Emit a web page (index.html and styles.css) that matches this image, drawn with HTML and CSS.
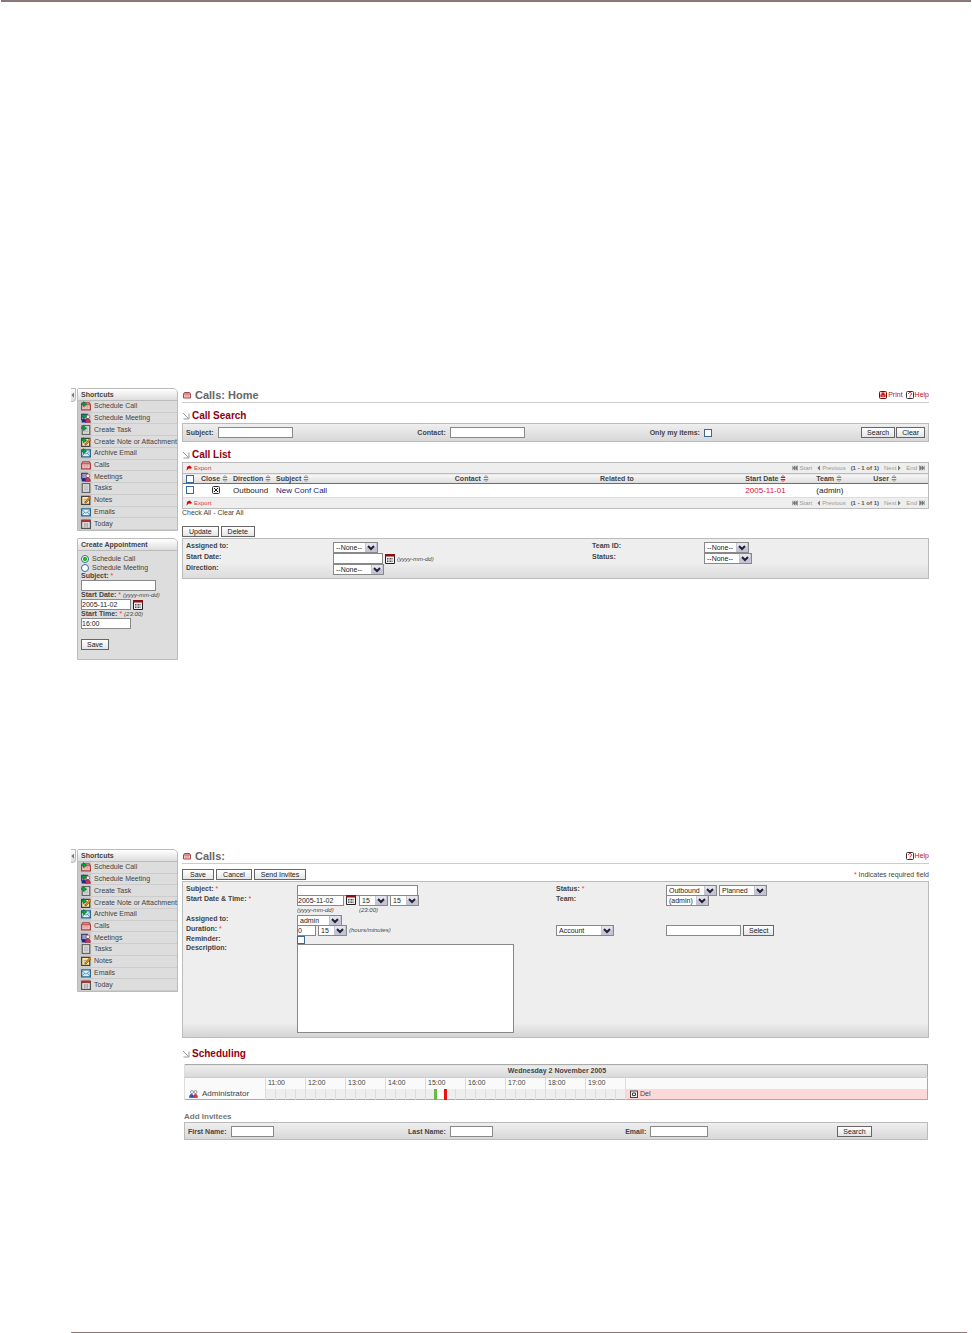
FILE: index.html
```html
<!DOCTYPE html>
<html lang="en">
<head>
    <meta charset="UTF-8">
    <meta name="viewport" content="width=device-width, initial-scale=1.0">
    <title>Calls</title>
    <link rel="stylesheet" href="styles.css">
</head>
<body>
    <!-- shared icons -->
    <svg class="sprite" aria-hidden="true">
        <symbol id="phone" viewBox="0 0 16 16"><path d="M1 6l2-3h10l2 3v8H1z" fill="#f6c8c8" stroke="#a44" stroke-width="2"/><path d="M2 6h12" stroke="#b55" stroke-width="2"/><path d="M5 9h6v2H5z" fill="#fff" stroke="#c77"/></symbol>
        <symbol id="people" viewBox="0 0 16 16"><path d="M1 2h9v9H1z" fill="#99c" stroke="#447" stroke-width="2"/><circle cx="11" cy="6" r="3" fill="#eee" stroke="#833"/><path d="M1 15c0-7 7-7 7 0z" fill="#228"/><path d="M7 15c0-8 8-8 8 0z" fill="#c35" stroke="#724"/></symbol>
        <symbol id="task" viewBox="0 0 16 16"><path d="M2 1h12v14H2z" fill="#eee" stroke="#666" stroke-width="2"/><path d="M4 5h8M4 8h8M4 11h8" stroke="#777" stroke-width="1"/></symbol>
        <symbol id="note" viewBox="0 0 16 16"><path d="M1 2h13v13H1z" fill="#ffe9a8" stroke="#444" stroke-width="2"/><path d="M4 7h5M4 10h4" stroke="#777"/><path d="M6 12L14 2l2 2-8 9z" fill="#e90" stroke="#733"/></symbol>
        <symbol id="mail" viewBox="0 0 16 16"><path d="M1 3h14v11H1z" fill="#d8f0fa" stroke="#2a6a90" stroke-width="2"/><path d="M1 4l7 6 7-6M1 14l5-6M15 14l-5-6" fill="none" stroke="#2a6a90"/></symbol>
        <symbol id="day" viewBox="0 0 16 16"><path d="M1 2h14v13H1z" fill="#eee" stroke="#555" stroke-width="2"/><path d="M1 1h14v4H1z" fill="#a33"/><path d="M4 8h8M4 11h8M6 6v8M10 6v8" stroke="#888"/></symbol>
        <symbol id="plus" viewBox="0 0 16 16"><path d="M1 6V3h3V1l5 4-5 4V6z" fill="#0a3" stroke="#063"/></symbol>
        <symbol id="section" viewBox="0 0 16 16"><path d="M2 2l11 11M14 3v11H3" fill="none" stroke="#999" stroke-width="2"/></symbol>
        <symbol id="sort" viewBox="0 0 12 14"><path d="M6 1l4 4H2zM2 9h8l-4 4z" fill="#fff" stroke="currentColor" stroke-width="2"/></symbol>
        <symbol id="export" viewBox="0 0 16 16"><path d="M1 15l2-9-1-1 8-4 6 7-4 2-5-1z" fill="#d00"/></symbol>
        <symbol id="first" viewBox="0 0 16 16"><path d="M2 2v12M8 2v12L3 8zM14 2v12L9 8z" fill="#777" stroke="#777" stroke-width="2"/></symbol>
        <symbol id="last" viewBox="0 0 16 16"><path d="M14 2v12M8 2v12l5-6zM2 2v12l5-6z" fill="#777" stroke="#777" stroke-width="2"/></symbol>
        <symbol id="prev" viewBox="0 0 8 16"><path d="M8 1v14L1 8z" fill="#777"/></symbol>
        <symbol id="next" viewBox="0 0 8 16"><path d="M0 1v14l7-7z" fill="#777"/></symbol>
        <symbol id="close" viewBox="0 0 16 16"><rect x="1" y="1" width="14" height="14" rx="2" fill="#eee" stroke="#333" stroke-width="2"/><path d="M4 4l8 8M12 4l-8 8" stroke="#222" stroke-width="2"/></symbol>
        <symbol id="delete" viewBox="0 0 16 16"><rect x="1" y="2" width="14" height="13" fill="#eee" stroke="#444" stroke-width="2"/><path d="M5 6h6v5H5z" fill="none" stroke="#444" stroke-width="2"/></symbol>
        <symbol id="print" viewBox="0 0 16 16"><rect x="1" y="1" width="14" height="14" rx="2" fill="#fdd" stroke="#611" stroke-width="2"/><path d="M5 3h6v4h2v5H3V7h2z" fill="#d11"/><path d="M5 10h6" stroke="#fff"/></symbol>
        <symbol id="help" viewBox="0 0 16 16"><rect x="1" y="1" width="14" height="14" rx="2" fill="#fff" stroke="#333" stroke-width="2"/><path d="M5 6c0-4 6-4 6 0 0 2-3 2-3 4M8 11v2" fill="none" stroke="#d11" stroke-width="2"/></symbol>
        <symbol id="calendar" viewBox="0 0 20 20"><path d="M1 1h18v18H1z" fill="#eee" stroke="#222" stroke-width="2"/><path d="M0 0h20v5H0z" fill="#811"/><path d="M4 9h12M4 12h12M4 15h12" stroke="#555" stroke-width="2" stroke-dasharray="2 1"/></symbol>
        <symbol id="users" viewBox="0 0 18 16"><circle cx="6" cy="4" r="3" fill="#fff" stroke="#444"/><circle cx="13" cy="4" r="3" fill="#fff" stroke="#444"/><path d="M1 15c0-9 8-9 8 0z" fill="#35c" stroke="#226"/><path d="M9 15c0-9 8-9 8 0z" fill="#d34" stroke="#722"/></symbol>
    </svg>

    <div class="page">
        <section class="screen">
            <a class="handle" href="#" aria-label="Hide shortcuts"><svg><use href="#prev"/></svg></a>
            <aside class="sidebar">
                <nav class="box">
                    <h2 class="box-title">Shortcuts</h2>
                    <ul class="shortcuts">
                        <li><svg><use href="#phone"/><use href="#plus"/></svg><a href="#">Schedule Call</a></li>
                        <li><svg><use href="#people"/><use href="#plus"/></svg><a href="#">Schedule Meeting</a></li>
                        <li><svg><use href="#task"/><use href="#plus"/></svg><a href="#">Create Task</a></li>
                        <li><svg><use href="#note"/><use href="#plus"/></svg><a href="#">Create Note or Attachment</a></li>
                        <li><svg><use href="#mail"/><use href="#plus"/></svg><a href="#">Archive Email</a></li>
                        <li><svg><use href="#phone"/></svg><a href="#">Calls</a></li>
                        <li><svg><use href="#people"/></svg><a href="#">Meetings</a></li>
                        <li><svg><use href="#task"/></svg><a href="#">Tasks</a></li>
                        <li><svg><use href="#note"/></svg><a href="#">Notes</a></li>
                        <li><svg><use href="#mail"/></svg><a href="#">Emails</a></li>
                        <li><svg><use href="#day"/></svg><a href="#">Today</a></li>
                    </ul>
                </nav>
                <div class="box">
                    <h2 class="box-title">Create Appointment</h2>
                    <form class="quick">
                        <label class="choice"><input type="radio" name="kind" checked>Schedule Call</label>
                        <label class="choice"><input type="radio" name="kind">Schedule Meeting</label>
                        <label for="q-subject">Subject: <b>*</b></label>
                        <input class="w-l" type="text" id="q-subject">
                        <label for="q-date">Start Date: <b>*</b> <i>(yyyy-mm-dd)</i></label>
                        <div class="fields"><input class="w-m" type="text" id="q-date" value="2005-11-02"><svg class="cal"><use href="#calendar"/></svg></div>
                        <label for="q-time">Start Time: <b>*</b> <i>(23:00)</i></label>
                        <input class="w-m" type="text" id="q-time" value="16:00">
                        <button type="button">Save</button>
                    </form>
                </div>
            </aside>
            <main class="main">
                <header class="title">
                    <h1><svg><use href="#phone"/></svg>Calls: Home</h1>
                    <a href="#"><svg><use href="#print"/></svg>Print</a>
                    <a href="#"><svg><use href="#help"/></svg>Help</a>
                </header>

                <h2 class="heading"><svg><use href="#section"/></svg>Call Search</h2>
                <form class="panel search">
                    <div><label for="s-subject">Subject:</label><input class="w-l" type="text" id="s-subject"></div>
                    <div><label for="s-contact">Contact:</label><input class="w-l" type="text" id="s-contact"></div>
                    <div><label for="s-mine">Only my items:</label><input type="checkbox" id="s-mine"></div>
                    <div class="end"><button type="button">Search</button><button type="button">Clear</button></div>
                </form>

                <h2 class="heading"><svg><use href="#section"/></svg>Call List</h2>
                <div class="list">
                    <div class="pager">
                        <a href="#"><svg><use href="#export"/></svg>Export</a>
                        <span><svg><use href="#first"/></svg>Start</span>
                        <span><svg class="thin"><use href="#prev"/></svg>Previous</span>
                        <strong>(1 - 1 of 1)</strong>
                        <span>Next<svg class="thin"><use href="#next"/></svg></span>
                        <span>End<svg><use href="#last"/></svg></span>
                    </div>
                    <table class="calls">
                        <colgroup>
                            <col class="c-check"><col class="c-close"><col class="c-dir"><col class="c-subject"><col class="c-wide"><col class="c-wide"><col class="c-date"><col class="c-team"><col>
                        </colgroup>
                        <thead>
                            <tr>
                                <th><input type="checkbox" aria-label="Select all"></th>
                                <th>Close <svg><use href="#sort"/></svg></th>
                                <th>Direction <svg><use href="#sort"/></svg></th>
                                <th>Subject <svg><use href="#sort"/></svg></th>
                                <th>Contact <svg><use href="#sort"/></svg></th>
                                <th>Related to</th>
                                <th class="sorted">Start Date <svg><use href="#sort"/></svg></th>
                                <th>Team <svg><use href="#sort"/></svg></th>
                                <th>User <svg><use href="#sort"/></svg></th>
                            </tr>
                        </thead>
                        <tbody>
                            <tr>
                                <td><input type="checkbox" aria-label="Select New Conf Call"></td>
                                <td class="mid"><svg><use href="#close"/></svg></td>
                                <td>Outbound</td>
                                <td><a href="#">New Conf Call</a></td>
                                <td></td>
                                <td></td>
                                <td class="late">2005-11-01</td>
                                <td>(admin)</td>
                                <td></td>
                            </tr>
                        </tbody>
                    </table>
                    <div class="pager">
                        <a href="#"><svg><use href="#export"/></svg>Export</a>
                        <span><svg><use href="#first"/></svg>Start</span>
                        <span><svg class="thin"><use href="#prev"/></svg>Previous</span>
                        <strong>(1 - 1 of 1)</strong>
                        <span>Next<svg class="thin"><use href="#next"/></svg></span>
                        <span>End<svg><use href="#last"/></svg></span>
                    </div>
                </div>
                <p class="check-all"><a href="#">Check All</a> - <a href="#">Clear All</a></p>

                <div class="buttons tight"><button type="button">Update</button><button type="button">Delete</button></div>
                <form class="panel update">
                    <label for="u-assigned">Assigned to:</label>
                    <div class="fields"><select class="w-45" id="u-assigned"><option>--None--</option></select></div>
                    <label for="u-team">Team ID:</label>
                    <div class="fields"><select class="w-45" id="u-team"><option>--None--</option></select></div>
                    <label for="u-date">Start Date:</label>
                    <div class="fields"><input class="w-m" type="text" id="u-date"><svg class="cal"><use href="#calendar"/></svg><i>(yyyy-mm-dd)</i></div>
                    <label for="u-status">Status:</label>
                    <div class="fields"><select class="w-48" id="u-status"><option>--None--</option></select></div>
                    <label for="u-direction">Direction:</label>
                    <div class="fields"><select class="w-51" id="u-direction"><option>--None--</option></select></div>
                </form>
            </main>
        </section>

        <section class="screen">
            <a class="handle" href="#" aria-label="Hide shortcuts"><svg><use href="#prev"/></svg></a>
            <aside class="sidebar">
                <nav class="box">
                    <h2 class="box-title">Shortcuts</h2>
                    <ul class="shortcuts">
                        <li><svg><use href="#phone"/><use href="#plus"/></svg><a href="#">Schedule Call</a></li>
                        <li><svg><use href="#people"/><use href="#plus"/></svg><a href="#">Schedule Meeting</a></li>
                        <li><svg><use href="#task"/><use href="#plus"/></svg><a href="#">Create Task</a></li>
                        <li><svg><use href="#note"/><use href="#plus"/></svg><a href="#">Create Note or Attachment</a></li>
                        <li><svg><use href="#mail"/><use href="#plus"/></svg><a href="#">Archive Email</a></li>
                        <li><svg><use href="#phone"/></svg><a href="#">Calls</a></li>
                        <li><svg><use href="#people"/></svg><a href="#">Meetings</a></li>
                        <li><svg><use href="#task"/></svg><a href="#">Tasks</a></li>
                        <li><svg><use href="#note"/></svg><a href="#">Notes</a></li>
                        <li><svg><use href="#mail"/></svg><a href="#">Emails</a></li>
                        <li><svg><use href="#day"/></svg><a href="#">Today</a></li>
                    </ul>
                </nav>
            </aside>
            <main class="main">
                <header class="title">
                    <h1><svg><use href="#phone"/></svg>Calls:</h1>
                    <a href="#"><svg><use href="#help"/></svg>Help</a>
                </header>

                <div class="buttons top">
                    <button class="w-32" type="button">Save</button>
                    <button class="w-36" type="button">Cancel</button>
                    <button class="w-52" type="button">Send Invites</button>
                    <span><b>*</b> Indicates required field</span>
                </div>
                <form class="panel edit">
                    <label for="e-subject">Subject: <b>*</b></label>
                    <div class="fields"><input class="w-xl" type="text" id="e-subject"></div>
                    <label for="e-status">Status: <b>*</b></label>
                    <div class="fields"><select class="w-51" aria-label="Direction"><option>Outbound</option></select><select class="w-48" id="e-status"><option>Planned</option></select></div>

                    <label for="e-date">Start Date &amp; Time: <b>*</b></label>
                    <div class="times">
                        <div><div class="fields"><input class="w-47" type="text" id="e-date" value="2005-11-02"><svg class="cal"><use href="#calendar"/></svg></div><i>(yyyy-mm-dd)</i></div>
                        <div><div class="fields"><select class="w-29" aria-label="Hour"><option>15</option></select><select class="w-29" aria-label="Minute"><option>15</option></select></div><i>(23:00)</i></div>
                    </div>
                    <label for="e-team">Team:</label>
                    <div class="fields"><select class="w-43" id="e-team"><option>(admin)</option></select></div>

                    <label for="e-assigned">Assigned to:</label>
                    <div class="fields full"><select class="w-45" id="e-assigned"><option>admin</option></select></div>

                    <label for="e-hours">Duration: <b>*</b></label>
                    <div class="fields"><input class="w-18" type="text" id="e-hours" value="0"><select class="w-29" aria-label="Minutes"><option>15</option></select><i>(hours/minutes)</i></div>
                    <div class="fields"><select class="w-58" aria-label="Related to"><option>Account</option></select></div>
                    <div class="fields"><input class="w-l" type="text" aria-label="Related record"><button type="button">Select</button></div>

                    <label class="short" for="e-reminder">Reminder:</label>
                    <div class="fields full short"><input type="checkbox" id="e-reminder"></div>

                    <label for="e-text">Description:</label>
                    <div class="full"><textarea id="e-text"></textarea></div>
                </form>

                <h2 class="heading spaced"><svg><use href="#section"/></svg>Scheduling</h2>
                <div class="scheduling">
                    <table class="schedule">
                        <colgroup><col class="c-name"><col class="c-slot" span="36"><col></colgroup>
                        <thead>
                            <tr><th class="date" colspan="38">Wednesday 2 November 2005</th></tr>
                            <tr>
                                <td></td>
                                <th colspan="4">11:00</th><th colspan="4">12:00</th><th colspan="4">13:00</th>
                                <th colspan="4">14:00</th><th colspan="4">15:00</th><th colspan="4">16:00</th>
                                <th colspan="4">17:00</th><th colspan="4">18:00</th><th colspan="4">19:00</th>
                                <td></td>
                            </tr>
                        </thead>
                        <tbody>
                            <tr>
                                <td class="name"><svg><use href="#users"/></svg>Administrator</td>
                                <td></td><td></td><td></td><td></td>
                                <td></td><td></td><td></td><td></td>
                                <td></td><td></td><td></td><td></td>
                                <td></td><td></td><td></td><td></td>
                                <td class="starts"></td><td class="busy"></td><td></td><td></td>
                                <td></td><td></td><td></td><td></td>
                                <td></td><td></td><td></td><td></td>
                                <td></td><td></td><td></td><td></td>
                                <td></td><td></td><td></td><td></td>
                                <td class="del"><a href="#"><svg><use href="#delete"/></svg> Del</a></td>
                            </tr>
                        </tbody>
                    </table>
                    <h3>Add Invitees</h3>
                    <form class="panel invite">
                        <div><label for="i-first">First Name:</label><input class="w-43" type="text" id="i-first"></div>
                        <div><label for="i-last">Last Name:</label><input class="w-43" type="text" id="i-last"></div>
                        <div><label for="i-email">Email:</label><input class="w-58" type="text" id="i-email"></div>
                        <div><button type="button">Search</button></div>
                    </form>
                </div>
            </main>
        </section>
    </div>
</body>
</html>
```
FILE: styles.css
```css
* {
    box-sizing: border-box;
}

body {
    margin: 0;
    background-color: #fff;
    color: #444;
    font-family: "Liberation Sans", Arial, sans-serif;
    font-size: 7px;
    line-height: 8px;
}

.sprite {
    display: none;
}

.page {
    min-height: 100vh;
    margin: 0 1px;
    padding: 386px 42px 0 70px;
    border-top: 2px solid #8b7777;
    display: flex;
    flex-direction: column;
}

/* bottom page rule */
.page::after {
    content: "";
    height: 1px;
    margin-top: auto;
    margin-right: -38px;
    background-color: #8b7777;
}

.screen {
    display: grid;
    grid-template-columns: 5px 100px minmax(0, 1fr);
    align-items: start;
}

.screen + .screen {
    margin-top: 189px;
}

.handle {
    height: 14px;
    padding-top: 3px;
    border: 1px solid #bbb;
    border-left: 0;
    border-radius: 0 0 4px 0;
    background: linear-gradient(#fff, #ddd);
}

.handle svg {
    display: block;
    width: 3px;
    height: 6px;
}

h1, h2, h3, p, ul {
    margin: 0;
    padding: 0;
}

a {
    color: inherit;
    text-decoration: none;
}

b {
    color: #f33;
    font-weight: normal;
}

i {
    font-size: 6px;
    font-weight: normal;
}

svg {
    width: 8px;
    height: 8px;
    flex: none;
}

.cal {
    width: 10px;
    height: 10px;
}

/* controls */
input, select, textarea, button {
    margin: 0;
    font: inherit;
    font-weight: normal;
    color: #222;
    border: 1px solid #888;
    border-radius: 0;
    background-color: #fff;
}

input[type="text"] {
    height: 11px;
    padding: 0;
}

input[type="checkbox"] {
    appearance: none;
    width: 8px;
    height: 8px;
    border-color: #3a6a94;
    vertical-align: middle;
}

input[type="radio"] {
    appearance: none;
    width: 8px;
    height: 8px;
    border-color: #3a6a94;
    border-radius: 50%;
}

input[type="radio"]:checked {
    background: radial-gradient(circle, #2b2 40%, #fff 60%);
}

select {
    appearance: none;
    height: 11px;
    padding: 0 14px 0 2px;
    line-height: 9px;
    background: #fff url("data:image/svg+xml,%3Csvg xmlns='http://www.w3.org/2000/svg' viewBox='0 0 12 9'%3E%3Cpath d='M0 0h12v9H0z' fill='%23c4c4d4'/%3E%3Cpath d='M1 0h10v4H1z' fill='%23e4e4ee'/%3E%3Cpath d='M3 3l3 3 3-3' fill='none' stroke='%23223' stroke-width='2'/%3E%3C/svg%3E") right / 12px 9px no-repeat;
}

button {
    height: 11px;
    padding: 0 5px;
    line-height: 9px;
    border-color: #666;
    background: linear-gradient(#fff, #e4e4e4);
    white-space: nowrap;
}

textarea {
    display: block;
    width: 217px;
    height: 89px;
    resize: none;
}

.w-18 { width: 19px; }
.w-29 { width: 29px; }
.w-32 { width: 32px; }
.w-36 { width: 36px; }
.w-43 { width: 43px; }
.w-45 { width: 45px; }
.w-47 { width: 47px; }
.w-48 { width: 48px; }
.w-51 { width: 51px; }
.w-52 { width: 52px; }
.w-58 { width: 58px; }
.w-m { width: 50px; }
.w-l { width: 75px; }
.w-xl { width: 121px; }

/* sidebar */
.sidebar {
    padding-left: 1px;
    display: grid;
    gap: 7px;
}

.box {
    border: 1px solid #bbb;
    border-radius: 2px 5px 0 0;
    background-color: #ddd;
}

.box-title {
    height: 12px;
    padding-left: 3px;
    border-bottom: 1px solid #bbb;
    border-radius: 1px 4px 0 0;
    background: linear-gradient(#fff, #ddd);
    font-size: 7px;
    line-height: 11px;
}

.shortcuts {
    height: 129px;
    display: grid;
    grid-auto-rows: 1fr;
    list-style: none;
    background: linear-gradient(90deg, #c8c8c8 12px, #ddd 14px);
}

.shortcuts li {
    display: flex;
    align-items: center;
    gap: 3px;
    padding-left: 3px;
    border-bottom: 1px solid #ccc;
    white-space: nowrap;
}

.shortcuts svg {
    width: 10px;
    height: 10px;
}

.quick {
    padding: 3px 3px 9px;
    display: grid;
    justify-items: start;
    font-weight: bold;
}

.quick .choice {
    display: flex;
    align-items: center;
    gap: 3px;
    font-weight: normal;
    line-height: 9px;
}

.quick button {
    margin-top: 10px;
}

.fields {
    display: flex;
    align-items: center;
    gap: 2px;
}

/* main column */
.main {
    padding-left: 6px;
}

.title {
    height: 15px;
    display: flex;
    align-items: center;
    gap: 3px;
    border-bottom: 1px solid #ccc;
    color: #c01020;
}

.title h1 {
    flex: 1;
    display: flex;
    align-items: center;
    gap: 4px;
    padding-left: 1px;
    color: #666;
    font-size: 11px;
    line-height: 14px;
}

.title a {
    display: flex;
    align-items: center;
    gap: 1px;
}

.heading {
    padding: 7px 0 1px;
    display: flex;
    align-items: center;
    gap: 2px;
    color: #900010;
    font-size: 10px;
    line-height: 12px;
}

.heading.spaced {
    padding-top: 10px;
}

.panel {
    border: 1px solid #bbb;
    padding: 3px;
    background: linear-gradient(#efefef, #d8d8d8);
}

.panel label {
    font-weight: bold;
}

.search, .invite {
    display: grid;
    grid-template-columns: 232fr 233fr 212fr 62fr;
    height: 19px;
    align-items: center;
}

.search div, .invite div {
    display: flex;
    align-items: center;
    gap: 4px;
}

.search .end {
    justify-content: flex-end;
    gap: 1px;
}

.list {
    border: 1px solid #bbb;
}

.pager {
    height: 10px;
    padding: 0 3px;
    display: flex;
    align-items: center;
    gap: 5px;
    background-color: #eee;
    color: #999;
    font-size: 6px;
}

.pager a {
    margin-right: auto;
    color: #d33;
}

.pager a, .pager span {
    display: flex;
    align-items: center;
    gap: 2px;
}

.pager strong {
    color: #555;
}

.pager svg {
    width: 6px;
    height: 6px;
}

.pager .thin {
    width: 3px;
}

.calls, .schedule {
    width: 100%;
    table-layout: fixed;
    border-collapse: collapse;
}

.c-check { width: 15px; }
.c-close { width: 32px; }
.c-dir { width: 43px; }
.c-subject { width: 24%; }
.c-wide { width: 19.5%; }
.c-date { width: 71px; }
.c-team { width: 57px; }
.c-name { width: 81px; }
.c-slot { width: 10px; }

.calls th, .calls td {
    height: 14px;
    padding: 0 0 0 3px;
    text-align: left;
    font-size: 8px;
    line-height: 8px;
    white-space: nowrap;
}

.calls th {
    height: 10px;
    border-top: 1px solid #bbb;
    border-bottom: 1px solid #c44;
    background: linear-gradient(#f8f8f8, #ddd);
    font-size: 7px;
}

.calls td {
    border-bottom: 1px solid #ddd;
    color: #222;
}

.calls svg {
    vertical-align: middle;
}

.calls th svg {
    width: 6px;
    height: 7px;
    color: #888;
}

.calls .sorted svg {
    color: #c22;
}

.calls td a {
    color: #1a1a80;
}

.calls .mid {
    text-align: center;
}

.calls .late {
    color: #e01030;
}

.buttons {
    display: flex;
    align-items: center;
    gap: 2px;
    padding: 9px 0 1px;
}

.buttons.tight button {
    padding: 0 6px;
}

.buttons.top {
    padding: 5px 0 1px;
}

.buttons span {
    margin-left: auto;
}

.update {
    display: grid;
    grid-template-columns: 147fr 259fr 112fr 221fr;
    background: linear-gradient(#eee 60%, #dcdcdc);
}

.update .fields {
    height: 11px;
}

.edit {
    display: grid;
    grid-template-columns: 111fr 259fr 110fr 259fr;
    padding-bottom: 4px;
    background: #eee linear-gradient(#eee, #d4d4d4) bottom / 100% 14px no-repeat;
}

.edit .full {
    grid-column: span 3;
}

.edit .fields {
    height: 10px;
}

.edit .times {
    display: flex;
    gap: 3px;
    height: 20px;
}

.edit .times > div {
    display: grid;
}

.edit > .short {
    height: 9px;
}

/* scheduling */
.scheduling {
    padding: 3px 1px 0 2px;
}

.schedule {
    border: 1px solid #aaa;
}

.schedule th, .schedule td {
    height: 11px;
    padding: 0;
    border-left: 1px solid #ddd;
    background-color: #fafafa;
    font-weight: normal;
    text-align: left;
}

.schedule th {
    padding-left: 2px;
}

.schedule .date {
    height: 13px;
    border-bottom: 1px solid #ccc;
    background: linear-gradient(#eee, #d8d8d8);
    font-weight: bold;
    text-align: center;
}

.schedule tbody td {
    background-color: #eee;
}

.schedule tbody .name {
    padding-left: 4px;
    background-color: #fafafa;
    font-size: 8px;
    white-space: nowrap;
}

.schedule svg {
    vertical-align: middle;
}

.name svg {
    width: 9px;
    margin-right: 4px;
}

.schedule tbody .starts {
    border-right: 3px solid #6b4;
}

.schedule tbody .busy {
    border-right: 3px solid #e11;
    background-color: #fff;
}

.schedule tbody .del {
    padding-left: 4px;
    background-color: #fdd8d8;
}

.scheduling h3 {
    padding: 12px 0 1px;
    color: #777;
    font-size: 8px;
    line-height: 9px;
}

.invite {
    grid-template-columns: 221fr 218fr 213fr 87fr;
    height: 18px;
}
```
